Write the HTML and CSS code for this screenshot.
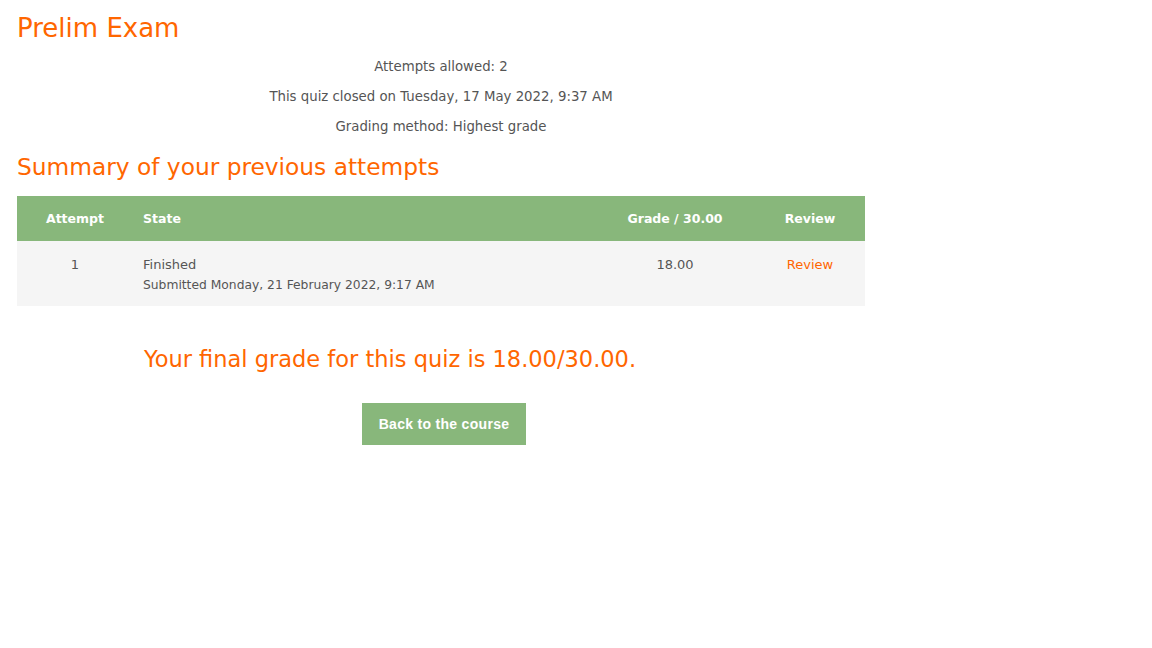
FILE: index.html
```html
<!DOCTYPE html>
<html>
<head>
<meta charset="utf-8">
<link rel="stylesheet" href="styles.css">
</head>
<body>
<div class="page">
  <h2 class="title">Prelim Exam</h2>
  <div class="info">
    <p>Attempts allowed: 2</p>
    <p>This quiz closed on Tuesday, 17 May 2022, 9:37 AM</p>
    <p>Grading method: Highest grade</p>
  </div>
  <h3 class="subtitle">Summary of your previous attempts</h3>
  <table class="attempts">
    <thead>
      <tr>
        <th class="c-attempt">Attempt</th>
        <th class="c-state">State</th>
        <th class="c-grade">Grade / 30.00</th>
        <th class="c-review">Review</th>
      </tr>
    </thead>
    <tbody>
      <tr>
        <td class="c-attempt">1</td>
        <td class="c-state">Finished<span class="submitted">Submitted Monday, 21 February 2022, 9:17 AM</span></td>
        <td class="c-grade">18.00</td>
        <td class="c-review"><a href="#">Review</a></td>
      </tr>
    </tbody>
  </table>
  <div class="final">Your final grade for this quiz is 18.00/30.00.</div>
  <div class="actions"><button class="btn">Back to the course</button></div>
</div>
</body>
</html>
```
FILE: styles.css
```css
html, body {
  margin: 0;
  padding: 0;
  background: #fff;
}
body {
  font-family: "DejaVu Sans", sans-serif;
  color: #555;
}
.page {
  width: 848px;
  padding: 0 17px;
}
.title {
  margin: 12px 0 0;
  font-size: 26px;
  line-height: 32px;
  font-weight: normal;
  color: #ff6600;
}
.info {
  margin-top: 8px;
  text-align: center;
  font-size: 13.3px;
}
.info p {
  margin: 0;
  line-height: 30px;
}
.subtitle {
  margin: 10px 0 0;
  font-size: 23.3px;
  line-height: 30px;
  font-weight: normal;
  color: #ff6600;
}
.attempts {
  margin-top: 14px;
  width: 848px;
  border-collapse: collapse;
  font-size: 13px;
}
.attempts th {
  background: #88b77b;
  color: #fff;
  font-weight: bold;
  font-size: 12.5px;
  height: 45px;
  padding: 0 10px;
}
.attempts td {
  background: #f5f5f5;
  vertical-align: top;
  padding: 16px 10px 13px;
  line-height: 16px;
}
.c-attempt { width: 96px; text-align: center; }
.c-state { text-align: left; }
.c-grade { width: 140px; text-align: center; }
.c-review { width: 90px; text-align: center; }
.submitted {
  display: block;
  margin-top: 4px;
  font-size: 12.3px;
}
.attempts a {
  color: #ff6600;
  text-decoration: none;
}
.final {
  margin-top: 38px;
  padding-right: 102px;
  text-align: center;
  font-size: 22.5px;
  line-height: 30px;
  color: #ff6600;
}
.actions {
  margin-top: 29px;
  display: flex;
  justify-content: center;
  padding-left: 6px;
}
.btn {
  border: 0;
  background: #88b77b;
  color: #fff;
  font-family: "Liberation Sans", Arial, sans-serif;
  font-weight: bold;
  font-size: 14px;
  letter-spacing: 0.3px;
  width: 164px;
  height: 42px;
  padding: 0;
  border-radius: 0;
}
```
